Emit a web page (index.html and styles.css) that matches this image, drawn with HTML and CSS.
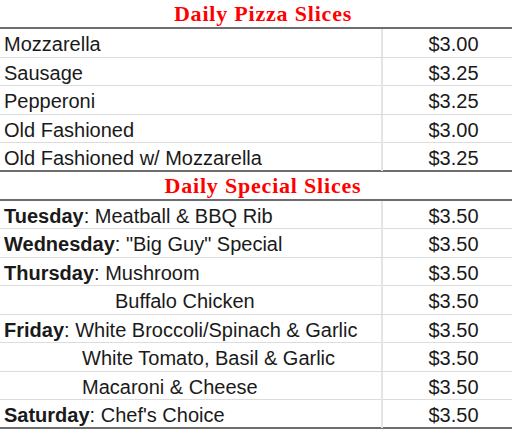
FILE: index.html
```html
<!DOCTYPE html>
<html>
<head>
<meta charset="utf-8">
<link rel="stylesheet" href="styles.css">
</head>
<body>
<div class="menu">
  <div class="head">Daily Pizza Slices</div>
  <div class="row"><div class="item">Mozzarella</div><div class="price">$3.00</div></div>
  <div class="row"><div class="item">Sausage</div><div class="price">$3.25</div></div>
  <div class="row"><div class="item">Pepperoni</div><div class="price">$3.25</div></div>
  <div class="row"><div class="item">Old Fashioned</div><div class="price">$3.00</div></div>
  <div class="row last"><div class="item">Old Fashioned w/ Mozzarella</div><div class="price">$3.25</div></div>
  <div class="head">Daily Special Slices</div>
  <div class="row"><div class="item"><b>Tuesday</b>: Meatball &amp; BBQ Rib</div><div class="price">$3.50</div></div>
  <div class="row"><div class="item"><b>Wednesday</b>: "Big Guy" Special</div><div class="price">$3.50</div></div>
  <div class="row"><div class="item"><b>Thursday</b>: Mushroom</div><div class="price">$3.50</div></div>
  <div class="row"><div class="item indent-lg">Buffalo Chicken</div><div class="price">$3.50</div></div>
  <div class="row"><div class="item"><b>Friday</b>: White Broccoli/Spinach &amp; Garlic</div><div class="price">$3.50</div></div>
  <div class="row"><div class="item indent-md">White Tomato, Basil &amp; Garlic</div><div class="price">$3.50</div></div>
  <div class="row"><div class="item indent-md">Macaroni &amp; Cheese</div><div class="price">$3.50</div></div>
  <div class="row last"><div class="item"><b>Saturday</b>: Chef's Choice</div><div class="price">$3.50</div></div>
</div>
</body>
</html>
```
FILE: styles.css
```css
html, body {
  margin: 0;
  padding: 0;
  background: #ffffff;
  overflow: hidden;
}
.menu {
  width: 524px;
  font-family: "Liberation Sans", Arial, sans-serif;
  font-size: 20px;
  color: #1a1a1a;
}
.head {
  box-sizing: border-box;
  height: 29px;
  border-bottom: 2px solid #6e6e6e;
  text-align: center;
  font-family: "Liberation Serif", Georgia, serif;
  font-weight: bold;
  font-size: 22px;
  letter-spacing: 0.8px;
  color: #ff0000;
  line-height: 27px;
  padding-left: 2px;
}
.row {
  box-sizing: border-box;
  height: 28.5px;
  display: grid;
  grid-template-columns: 383px 1fr;
  border-bottom: 1px solid #dcdcdc;
}
.row.last {
  border-bottom: 2px solid #6e6e6e;
}
.item {
  padding: 2px 0 0 4px;
  line-height: 26px;
  white-space: nowrap;
  border-right: 2px solid #e4e4e4;
}
.price {
  padding-top: 2px;
  line-height: 26px;
  text-align: center;
}
.indent-md {
  padding-left: 82px;
}
.indent-lg {
  padding-left: 115px;
}
b {
  font-weight: bold;
}
```
